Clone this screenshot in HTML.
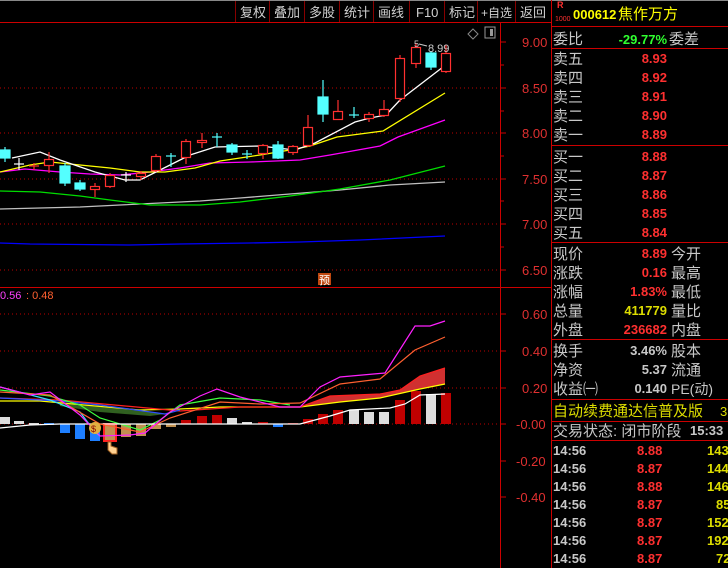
<!DOCTYPE html>
<html><head><meta charset="utf-8"><style>
html,body{margin:0;padding:0;background:#000;width:728px;height:568px;overflow:hidden}
svg{display:block}
text{font-family:"Liberation Sans","Noto Sans CJK SC",sans-serif}
.cn{font-size:15px;fill:#c8c8c8}
.num{font-size:13px;font-weight:bold}
</style></head><body>
<svg width="728" height="568" viewBox="0 0 728 568" xmlns="http://www.w3.org/2000/svg">
<rect width="728" height="568" fill="#000"/>
<line x1="0" y1="0.5" x2="728" y2="0.5" stroke="#888"/>
<!-- toolbar -->
<g stroke="#800" stroke-width="1">
<line x1="235.5" y1="1" x2="235.5" y2="22"/><line x1="269.5" y1="1" x2="269.5" y2="22"/>
<line x1="304.5" y1="1" x2="304.5" y2="22"/><line x1="339.5" y1="1" x2="339.5" y2="22"/>
<line x1="373.5" y1="1" x2="373.5" y2="22"/><line x1="409.5" y1="1" x2="409.5" y2="22"/>
<line x1="444.5" y1="1" x2="444.5" y2="22"/><line x1="477.5" y1="1" x2="477.5" y2="22"/>
<line x1="515.5" y1="1" x2="515.5" y2="22"/>
</g>
<g font-size="13" fill="#d0d0d0">
<text x="240" y="17">复权</text><text x="274" y="17">叠加</text><text x="309" y="17">多股</text>
<text x="344" y="17">统计</text><text x="378" y="17">画线</text><text x="416" y="17">F10</text>
<text x="449" y="17">标记</text><text x="481" y="17" font-size="12">+自选</text><text x="520" y="17">返回</text>
</g>
<line x1="0" y1="22.5" x2="551" y2="22.5" stroke="#c00"/>
<!-- axis -->
<line x1="500.5" y1="22" x2="500.5" y2="568" stroke="#c00"/>
<line x1="551.5" y1="0" x2="551.5" y2="568" stroke="#c00"/>
<line x1="0" y1="287.5" x2="551" y2="287.5" stroke="#c00"/>
<g stroke="#b00" stroke-dasharray="1,3">
<line x1="0" y1="88" x2="500" y2="88"/><line x1="0" y1="133" x2="500" y2="133"/>
<line x1="0" y1="179" x2="500" y2="179"/><line x1="0" y1="224" x2="500" y2="224"/>
<line x1="0" y1="270" x2="500" y2="270"/>
<line x1="0" y1="314" x2="500" y2="314"/><line x1="0" y1="351" x2="500" y2="351"/>
<line x1="0" y1="388" x2="500" y2="388"/><line x1="0" y1="424" x2="500" y2="424"/>
</g>
<g stroke="#c00">
<line x1="500" y1="42" x2="506" y2="42"/><line x1="500" y1="65" x2="504" y2="65"/>
<line x1="500" y1="88" x2="506" y2="88"/><line x1="500" y1="111" x2="504" y2="111"/>
<line x1="500" y1="133" x2="506" y2="133"/><line x1="500" y1="156" x2="504" y2="156"/>
<line x1="500" y1="179" x2="506" y2="179"/><line x1="500" y1="201" x2="504" y2="201"/>
<line x1="500" y1="224" x2="506" y2="224"/><line x1="500" y1="247" x2="504" y2="247"/>
<line x1="500" y1="270" x2="506" y2="270"/>
<line x1="500" y1="314" x2="506" y2="314"/><line x1="500" y1="351" x2="506" y2="351"/>
<line x1="500" y1="388" x2="506" y2="388"/><line x1="500" y1="424" x2="506" y2="424"/>
<line x1="500" y1="461" x2="506" y2="461"/><line x1="500" y1="497" x2="506" y2="497"/>
</g>
<g font-size="13" fill="#e03030">
<text x="522" y="47">9.00</text><text x="522" y="93">8.50</text><text x="522" y="138">8.00</text>
<text x="522" y="184">7.50</text><text x="522" y="229">7.00</text><text x="522" y="275">6.50</text>
<text x="522" y="319">0.60</text><text x="522" y="356">0.40</text><text x="522" y="393">0.20</text>
<text x="516" y="429">-0.00</text><text x="516" y="466">-0.20</text><text x="516" y="502">-0.40</text>
</g>
<!-- icons -->
<path d="M473 29 L478 34 L473 39 L468 34 Z" fill="none" stroke="#888"/>
<rect x="485" y="27" width="10" height="11" fill="none" stroke="#999"/><rect x="490" y="29" width="3" height="7" fill="#999"/>
<!-- MAs -->
<g fill="none" stroke-width="1.3">
<polyline stroke="#0000ff" points="0,243 30,244 130,245 180,244 250,243 300,242 360,240 445,236"/>
<polyline stroke="#c0c0c0" points="0,209 40,208 80,207 120,205 160,203 200,201 240,198 290,194 340,190 390,185 445,182"/>
<polyline stroke="#00dd00" points="0,191 40,192 80,196 110,200 150,205 200,205 240,202 290,196 340,189 390,180 445,166"/>
<polyline stroke="#ff00ff" points="0,172 25,169 60,172 90,174 120,175 150,172 180,168 210,163 250,162 300,160 330,155 380,146 398,137 445,120"/>
<polyline stroke="#ffff00" points="0,172 30,165 50,162 80,165 110,168 140,172 165,172 195,168 220,161 260,155 290,150 310,146 337,137 383,131 445,93"/>
<polyline stroke="#ffffff" points="12,158 40,152 60,160 95,172 125,180 140,180 160,170 190,155 215,147 260,146 295,150 315,143 355,122 370,118 386,115 400,100 443,67"/>
</g>
<!-- candles -->
<g stroke-width="1.2">
<g stroke="#54ffff" fill="#54ffff">
<line x1="5" y1="147" x2="5" y2="162"/><rect x="0" y="150" width="10" height="8"/>
<line x1="65" y1="163" x2="65" y2="186"/><rect x="60" y="166" width="10" height="17"/>
<line x1="80" y1="180" x2="80" y2="191"/><rect x="75" y="183" width="10" height="6"/>
<line x1="171" y1="153" x2="171" y2="167"/><line x1="166" y1="156" x2="176" y2="156"/>
<line x1="217" y1="133" x2="217" y2="147"/><line x1="212" y1="137" x2="222" y2="137"/>
<line x1="232" y1="143" x2="232" y2="155"/><rect x="227" y="145" width="10" height="7"/>
<line x1="247" y1="150" x2="247" y2="159"/><line x1="242" y1="154" x2="252" y2="154"/>
<line x1="278" y1="141" x2="278" y2="159"/><rect x="273" y="145" width="10" height="13"/>
<line x1="323" y1="80" x2="323" y2="122"/><rect x="318" y="97" width="10" height="17"/>
<line x1="354" y1="107" x2="354" y2="118"/><line x1="349" y1="115" x2="359" y2="115"/>
<line x1="431" y1="51" x2="431" y2="70"/><rect x="426" y="53" width="10" height="14"/>
</g>
<g stroke="#ffffff"><line x1="19" y1="158" x2="19" y2="170"/><line x1="14" y1="164" x2="24" y2="164"/>
<line x1="126" y1="172" x2="126" y2="182"/><line x1="121" y1="175" x2="131" y2="175"/></g>
<g stroke="#ff3030" fill="none">
<line x1="34" y1="163" x2="34" y2="170"/><line x1="29" y1="166" x2="39" y2="166"/>
<line x1="49" y1="152" x2="49" y2="173"/><rect x="44.5" y="159.5" width="9" height="6" fill="#000"/>
<line x1="95" y1="183" x2="95" y2="197"/><rect x="90.5" y="186.5" width="9" height="3" fill="#000"/>
<line x1="110" y1="173" x2="110" y2="188"/><rect x="105.5" y="175.5" width="9" height="11" fill="#000"/>
<line x1="141" y1="171" x2="141" y2="180"/><rect x="136.5" y="173.5" width="9" height="3" fill="#000"/>
<line x1="156" y1="154" x2="156" y2="172"/><rect x="151.5" y="156.5" width="9" height="14" fill="#000"/>
<line x1="186" y1="139" x2="186" y2="164"/><rect x="181.5" y="141.5" width="9" height="16" fill="#000"/>
<line x1="202" y1="133" x2="202" y2="148"/><rect x="197.5" y="140.5" width="9" height="2" fill="#000"/>
<line x1="263" y1="144" x2="263" y2="159"/><rect x="258.5" y="145.5" width="9" height="8" fill="#000"/>
<line x1="293" y1="145" x2="293" y2="155"/><rect x="288.5" y="146.5" width="9" height="6" fill="#000"/>
<line x1="308" y1="115" x2="308" y2="147"/><rect x="303.5" y="127.5" width="9" height="18" fill="#000"/>
<line x1="338" y1="100" x2="338" y2="120"/><rect x="333.5" y="111.5" width="9" height="8" fill="#000"/>
<line x1="369" y1="112" x2="369" y2="122"/><rect x="364.5" y="114.5" width="9" height="4" fill="#000"/>
<line x1="384" y1="100" x2="384" y2="117"/><rect x="379.5" y="109.5" width="9" height="6" fill="#000"/>
<line x1="400" y1="55" x2="400" y2="102"/><rect x="395.5" y="58.5" width="9" height="40" fill="#000"/>
<line x1="416" y1="43" x2="416" y2="68"/><rect x="411.5" y="47.5" width="9" height="16" fill="#000"/>
<line x1="446" y1="45" x2="446" y2="73"/><rect x="441.5" y="53.5" width="9" height="18" fill="#000"/>
</g></g>
<text x="428" y="52" font-size="11" fill="#ccc">8.99</text>
<text x="414" y="47" font-size="9" fill="#ccc">5</text>
<path d="M419 44 L427 46" stroke="#ccc"/>
<rect x="318" y="273" width="13" height="12" fill="#c04810"/><text x="319" y="284" font-size="11" fill="#fff">预</text>
<!-- bottom panel -->
<text x="0" y="299" font-size="11" fill="#ff40ff">0.56</text><text x="26" y="299" font-size="11" fill="#ff6030">: 0.48</text>
<polygon fill="#d03030" points="300,407 330,396 380,394 400,390 420,376 445,368 445,384 420,389 380,398 340,402 300,407"/>
<polygon fill="#306020" points="60,403 100,406 165,414 150,416 100,412 60,406"/>
<g>
<rect x="0" y="417" width="10" height="7" fill="#ddd"/><rect x="14" y="421" width="10" height="3" fill="#ddd"/>
<rect x="29" y="423" width="10" height="2" fill="#ddd"/><rect x="44" y="423" width="10" height="2" fill="#1e7fff"/>
<rect x="60" y="424" width="10" height="9" fill="#1e7fff"/><rect x="75" y="424" width="10" height="15" fill="#1e7fff"/>
<rect x="90" y="424" width="10" height="17" fill="#1e7fff"/>
<rect x="104" y="424" width="12" height="17" fill="#c09050" stroke="#ff2020" stroke-width="2"/>
<rect x="121" y="424" width="10" height="13" fill="#c09050"/><rect x="136" y="424" width="10" height="12" fill="#c09050"/>
<rect x="151" y="424" width="10" height="5" fill="#c09050"/><rect x="166" y="424" width="10" height="3" fill="#c09050"/>
<rect x="181" y="420" width="10" height="4" fill="#c00000"/><rect x="197" y="416" width="10" height="8" fill="#c00000"/>
<rect x="212" y="415" width="10" height="9" fill="#c00000"/><rect x="227" y="418" width="10" height="6" fill="#ddd"/>
<rect x="242" y="422" width="10" height="2" fill="#ddd"/><rect x="258" y="422" width="10" height="2" fill="#c00000"/>
<rect x="273" y="424" width="10" height="3" fill="#1e7fff"/><rect x="288" y="423" width="10" height="1" fill="#c00000"/>
<rect x="303" y="419" width="10" height="5" fill="#c00000"/><rect x="318" y="414" width="10" height="10" fill="#c00000"/>
<rect x="333" y="410" width="10" height="14" fill="#c00000"/><rect x="349" y="410" width="10" height="14" fill="#ddd"/>
<rect x="364" y="412" width="10" height="12" fill="#ddd"/><rect x="379" y="412" width="10" height="12" fill="#ddd"/>
<rect x="395" y="400" width="10" height="24" fill="#c00000"/><rect x="411" y="391" width="10" height="33" fill="#c00000"/>
<rect x="426" y="394" width="10" height="30" fill="#ddd"/><rect x="441" y="393" width="10" height="31" fill="#c00000"/>
</g>
<g fill="none" stroke-width="1.2">
<polyline stroke="#ffff00" points="0,401 40,401 140,410 180,409 220,407 300,407 340,402 380,398 420,389 445,384"/>
<polyline stroke="#ff2020" points="0,398 60,400 180,411 240,407 300,407 330,396 380,394 400,390 420,376 445,368"/>
<polyline stroke="#3050ff" points="0,398 60,401 100,405 165,414 180,410"/>
<polyline stroke="#40ff40" points="0,390 50,396 80,405 100,418 140,430 160,420 180,405 220,398 260,400 290,405"/>
<polyline stroke="#30e0ff" points="0,387 50,400 80,412 95,432 100,436"/>
<polyline stroke="#ffffff" points="0,428 30,425 60,424 300,424 330,416 350,410 390,408 405,404 420,395 445,394"/>
<polyline stroke="#ff6030" points="0,392 50,395 100,424 140,432 170,418 220,402 260,404 300,403 340,384 380,379 415,350 445,337"/>
<polyline stroke="#ff20ff" points="0,387 30,395 50,392 80,415 100,436 130,435 145,433 170,412 200,396 217,389 240,397 280,407 300,407 320,387 340,377 385,373 415,326 430,326 445,321"/>
</g>
<circle cx="95" cy="428" r="6" fill="#e0b040"/><text x="91" y="432" font-size="9" fill="#800">$</text>
<path d="M108 442 v8 l4 4 h5 v-6 l-6 -2 v-4z" fill="#ffd090" stroke="#a06020"/>
<!-- right panel -->
<text x="557" y="8" font-size="9" fill="#ff3030" font-weight="bold">R</text>
<text x="555" y="21" font-size="7" fill="#ff3030">1000</text>
<text x="573" y="19" font-size="13" font-weight="bold" fill="#ffff00">000612</text>
<text x="618" y="19" font-size="15" fill="#ffff00">焦作万方</text>
<line x1="551" y1="26.5" x2="728" y2="26.5" stroke="#c00"/>
<text x="553" y="44" class="cn">委比</text><text x="667" y="44" text-anchor="end" class="num" fill="#30ff30">-29.77%</text><text x="669" y="44" class="cn">委差</text>
<line x1="551" y1="48.5" x2="728" y2="48.5" stroke="#c00"/>
<g class="cn">
<text x="553" y="64">卖五</text><text x="553" y="83">卖四</text><text x="553" y="102">卖三</text><text x="553" y="121">卖二</text><text x="553" y="140">卖一</text>
<text x="553" y="162">买一</text><text x="553" y="181">买二</text><text x="553" y="200">买三</text><text x="553" y="219">买四</text><text x="553" y="238">买五</text>
</g>
<g class="num" fill="#ff3030" text-anchor="end">
<text x="667" y="63">8.93</text><text x="667" y="82">8.92</text><text x="667" y="101">8.91</text><text x="667" y="120">8.90</text><text x="667" y="139">8.89</text>
<text x="667" y="161">8.88</text><text x="667" y="180">8.87</text><text x="667" y="199">8.86</text><text x="667" y="218">8.85</text><text x="667" y="237">8.84</text>
</g>
<line x1="551" y1="145.5" x2="728" y2="145.5" stroke="#c00"/>
<line x1="551" y1="242.5" x2="728" y2="242.5" stroke="#c00"/>
<g class="cn">
<text x="553" y="259">现价</text><text x="553" y="278">涨跌</text><text x="553" y="297">涨幅</text><text x="553" y="316">总量</text><text x="553" y="335">外盘</text>
<text x="671" y="259">今开</text><text x="671" y="278">最高</text><text x="671" y="297">最低</text><text x="671" y="316">量比</text><text x="671" y="335">内盘</text>
<text x="553" y="356">换手</text><text x="553" y="375">净资</text><text x="553" y="394">收益㈠</text>
<text x="671" y="356">股本</text><text x="671" y="375">流通</text><text x="671" y="394" font-size="14">PE(动)</text>
</g>
<g class="num" text-anchor="end">
<text x="667" y="258" fill="#ff3030">8.89</text><text x="667" y="277" fill="#ff3030">0.16</text><text x="667" y="296" fill="#ff3030">1.83%</text>
<text x="667" y="315" fill="#dddd00">411779</text><text x="667" y="334" fill="#ff3030">236682</text>
<text x="667" y="355" fill="#c8c8c8">3.46%</text><text x="667" y="374" fill="#c8c8c8">5.37</text><text x="667" y="393" fill="#c8c8c8">0.140</text>
</g>
<line x1="551" y1="339.5" x2="728" y2="339.5" stroke="#c00"/>
<line x1="551" y1="399.5" x2="728" y2="399.5" stroke="#c00"/>
<text x="553" y="416" font-size="15" fill="#dddd00">自动续费通达信普及版</text><text x="720" y="416" font-size="13" fill="#dddd00">3</text>
<line x1="551" y1="421.5" x2="728" y2="421.5" stroke="#c00"/>
<text x="553" y="436" class="cn">交易状态: 闭市阶段</text><text x="690" y="435" class="num" fill="#c8c8c8">15:33</text>
<line x1="551" y1="440.5" x2="728" y2="440.5" stroke="#c00"/>
<g class="num">
<g fill="#c8c8c8">
<text x="553" y="455">14:56</text><text x="553" y="473">14:56</text><text x="553" y="491">14:56</text><text x="553" y="509">14:56</text>
<text x="553" y="527">14:56</text><text x="553" y="545">14:56</text><text x="553" y="563">14:56</text></g>
<g fill="#ff3030">
<text x="637" y="455">8.88</text><text x="637" y="473">8.87</text><text x="637" y="491">8.88</text><text x="637" y="509">8.87</text>
<text x="637" y="527">8.87</text><text x="637" y="545">8.87</text><text x="637" y="563">8.87</text></g>
<g fill="#dddd00">
<text x="707" y="455">143</text><text x="707" y="473">144</text><text x="707" y="491">146</text><text x="716" y="509">85</text>
<text x="707" y="527">152</text><text x="707" y="545">192</text><text x="716" y="563">72</text></g>
</g>
</svg>
</body></html>
